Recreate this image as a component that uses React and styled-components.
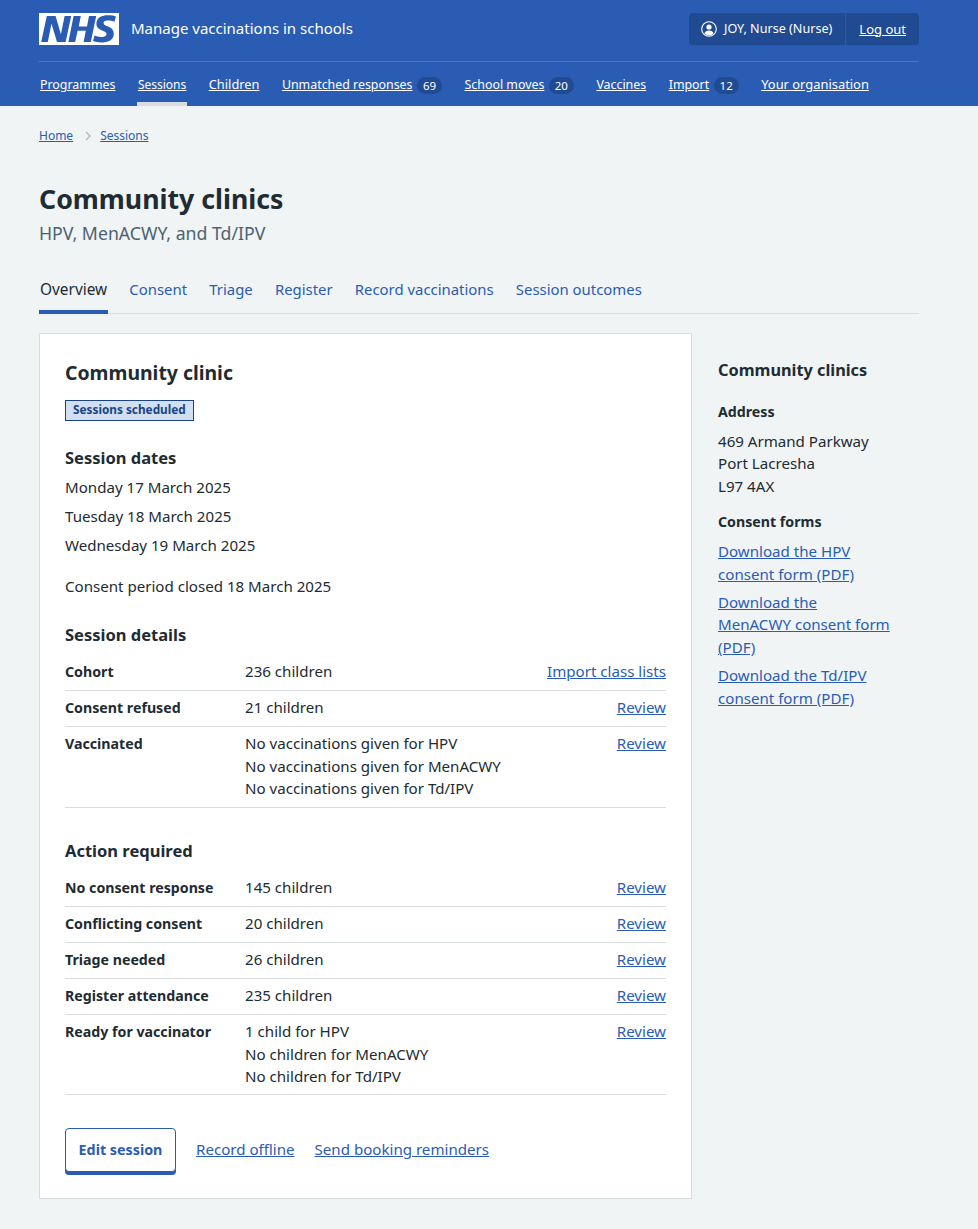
import React from "react";
import styled, { createGlobalStyle } from "styled-components";

const GlobalStyle = createGlobalStyle`
  html, body { margin: 0; padding: 0; }
  body {
    background: #f0f4f5;
    color: #212b32;
    font-family: "Noto Sans", "Open Sans", sans-serif;
    font-size: 15.1px;
    line-height: 22.4px;
  }
  a { color: #2a5cb4; }
`;

const Header = styled.header`
  background: #2a5cb4;
  color: #fff;
  padding: 13px 59px 0 39px;
  height: 106px;
  box-sizing: border-box;
`;

const TopRow = styled.div`
  display: flex;
  align-items: center;
  justify-content: space-between;
  height: 32px;
  padding-bottom: 16px;
  border-bottom: 1px solid #4a76c4;
`;

const Brand = styled.div`
  display: flex;
  align-items: center;
  gap: 12px;
  font-size: 15px;
  padding-bottom: 1px;
`;

const Logo = styled.svg`
  width: 80px;
  height: 32px;
  display: block;
  margin-top: 1px;
`;

const Account = styled.div`
  display: flex;
  height: 32px;
  background: #204a91;
  border-radius: 4px;
  font-size: 12.6px;
  align-items: stretch;
`;

const AccountName = styled.div`
  display: flex;
  align-items: center;
  gap: 7px;
  padding: 0 13px 0 12px;
  border-right: 1px solid #2a5cb4;
  white-space: nowrap;
`;

const AccountLink = styled.a`
  display: flex;
  align-items: center;
  padding: 0 13px;
  font-size: 13px;
  && { color: #fff; }
`;

const Nav = styled.nav`
  display: flex;
  height: 44px;
`;

const NavItem = styled.a`
  display: flex;
  align-items: center;
  gap: 4.5px;
  font-size: ${(p) => p.$size || "12.4px"};
  padding: ${(p) => (p.$raised ? "5px" : "7px")} 1px 0;
  margin-right: 20.5px;
  height: 44px;
  box-sizing: border-box;
  white-space: nowrap;
  text-decoration: none;
  border-bottom: 4px solid ${(p) => (p.$active ? "#d8dde0" : "transparent")};
  && { color: #fff; }
  span:first-child { text-decoration: underline; }
`;

const Count = styled.span`
  background: #204a91;
  border-radius: 9px;
  font-size: 11.5px;
  height: 17px;
  line-height: 17px;
  width: 25px;
  text-align: center;
`;

const Main = styled.main`
  padding: 0 59px 30px 39px;
`;

const Breadcrumb = styled.div`
  display: flex;
  align-items: center;
  font-size: 12px;
  height: 20px;
  padding-top: 20px;
`;

const Chevron = styled.svg`
  width: 8px;
  height: 10px;
  margin: 0 8px 0 11px;
`;

const Title = styled.h1`
  font-size: 26.7px;
  line-height: 36px;
  font-weight: 700;
  margin: 35px 0 0;
`;

const Subtitle = styled.div`
  font-size: 17.7px;
  line-height: 26px;
  color: #4c6272;
  margin-top: 3px;
`;

const Tabs = styled.div`
  display: flex;
  gap: 20.2px;
  margin-top: 21px;
  border-bottom: 1px solid #d8dde0;
  height: 46px;
`;

const Tab = styled.a`
  padding: ${(p) => (p.$active ? "12px" : "11px")} 1px 0;
  height: 47px;
  box-sizing: border-box;
  text-decoration: none;
  font-size: ${(p) => (p.$active ? "15.4px" : "14.9px")};
  color: ${(p) => (p.$active ? "#212b32" : "#2a5cb4")};
  border-bottom: ${(p) => (p.$active ? "4px solid #2a5cb4" : "none")};
`;

const Columns = styled.div`
  display: grid;
  grid-template-columns: 653px 1fr;
  column-gap: 26px;
  margin-top: 19px;
`;

const Card = styled.section`
  background: #fff;
  border: 1px solid #d8dde0;
  padding: 25px 25px 23px;
  box-sizing: border-box;
  height: 866px;
`;

const CardTitle = styled.h2`
  font-size: 19.4px;
  line-height: 28px;
  font-weight: 700;
  margin: 0;
`;

const Tag = styled.strong`
  display: inline-block;
  margin-top: 13px;
  padding: 0 7px;
  height: 19px;
  line-height: 17px;
  font-size: 11.8px;
  font-weight: 700;
  background: #d0dff2;
  border: 1px solid #1d4482;
  color: #1d4482;
`;

const SectionTitle = styled.h3`
  font-size: 16.5px;
  line-height: 24px;
  font-weight: 700;
  margin: ${(p) => p.$top || "25px"} 0 0;
`;

const DateLine = styled.p`
  margin: ${(p) => p.$top || "6.6px"} 0 0;
`;

const Rows = styled.div`
  margin-top: ${(p) => p.$top};
`;

const Row = styled.div`
  display: grid;
  grid-template-columns: 180px 1fr auto;
  padding: 5.5px 0 7.1px;
  border-bottom: 1px solid #d8dde0;
`;

const RowKey = styled.div`
  font-weight: 700;
  font-size: 14.2px;
  margin: 0.5px 0 -0.5px;
`;

const Actions = styled.div`
  display: flex;
  align-items: flex-start;
  gap: 20px;
  margin-top: 33px;
`;

const EditButton = styled.a`
  display: block;
  width: 111px;
  height: 44px;
  box-sizing: border-box;
  border: 1px solid #2a5cb4;
  border-radius: 4px;
  box-shadow: 0 3px 0 #2a5cb4;
  background: #fff;
  text-align: center;
  line-height: 42px;
  font-weight: 700;
  font-size: 14.3px;
  text-decoration: none;
`;

const ActionLink = styled.a`
  margin-top: 10px;
`;

const Side = styled.aside`
  padding-top: 25px;
`;

const SideTitle = styled.h2`
  font-size: 16.3px;
  line-height: 24px;
  font-weight: 700;
  margin: 0;
`;

const SideHeading = styled.h3`
  font-size: 14.2px;
  line-height: 22px;
  font-weight: 700;
  margin: ${(p) => p.$top} 0 7px;
`;

const SideLink = styled.a`
  display: block;
  margin-bottom: 6px;
`;

const rowsTop = [
  ["Cohort", ["236 children"], "Import class lists"],
  ["Consent refused", ["21 children"], "Review"],
  ["Vaccinated", ["No vaccinations given for HPV", "No vaccinations given for MenACWY", "No vaccinations given for Td/IPV"], "Review"],
];

const rowsAction = [
  ["No consent response", ["145 children"], "Review"],
  ["Conflicting consent", ["20 children"], "Review"],
  ["Triage needed", ["26 children"], "Review"],
  ["Register attendance", ["235 children"], "Review"],
  ["Ready for vaccinator", ["1 child for HPV", "No children for MenACWY", "No children for Td/IPV"], "Review"],
];

const navItems = [
  { label: "Programmes" },
  { label: "Sessions", active: true, size: "12px" },
  { label: "Children", size: "12.8px", raised: true },
  { label: "Unmatched responses", count: "69" },
  { label: "School moves", count: "20" },
  { label: "Vaccines" },
  { label: "Import", count: "12" },
  { label: "Your organisation", size: "12.9px", raised: true },
];

const tabs = ["Consent", "Triage", "Register", "Record vaccinations", "Session outcomes"];

function SummaryRows({ rows, top }) {
  return (
    <Rows $top={top}>
      {rows.map(([key, lines, action]) => (
        <Row key={key}>
          <RowKey>{key}</RowKey>
          <div>
            {lines.map((l) => (
              <div key={l}>{l}</div>
            ))}
          </div>
          <a href="#">{action}</a>
        </Row>
      ))}
    </Rows>
  );
}

export default function App() {
  return (
    <>
      <GlobalStyle />
      <Header>
        <TopRow>
          <Brand>
            <Logo viewBox="0 0 40 16" aria-label="NHS">
              <path fill="#fff" d="M0 0h40v16H0z" />
              <path
                fill="#2a5cb4"
                d="M3.9 1.5h4.4l2.6 9h.1l1.8-9h3.3l-2.8 13H9l-2.7-9h-.1l-1.8 9H1.1M17.3 1.5h3.6l-1 5.2h4.1l1-5.2h3.6l-2.7 13h-3.6l1.1-5.6h-4.1l-1.2 5.6h-3.4M37.7 4.4c-.7-.3-1.6-.6-2.9-.6-1.4 0-2.5.2-2.5 1.3 0 1.8 5.1 1.2 5.1 5.1 0 3.6-3.3 4.5-6.4 4.5-1.3 0-2.9-.3-4-.7l.8-2.7c.7.4 2.1.7 3.2.7s2.8-.2 2.8-1.5c0-2.1-5.1-1.3-5.1-5 0-3.4 2.9-4.4 5.8-4.4 1.6 0 3.1.2 4 .6"
              />
            </Logo>
            Manage vaccinations in schools
          </Brand>
          <Account>
            <AccountName>
              <svg width="16" height="16" viewBox="0 0 16 16">
                <circle cx="8" cy="8" r="7.3" fill="none" stroke="#fff" strokeWidth="1.1" />
                <circle cx="8" cy="6" r="2.6" fill="#fff" />
                <path fill="#fff" d="M3.4 12.6c.5-2 2.4-3.1 4.6-3.1s4.1 1.1 4.6 3.1A6.6 6.6 0 0 1 8 14.6a6.6 6.6 0 0 1-4.6-2z" />
              </svg>
              JOY, Nurse (Nurse)
            </AccountName>
            <AccountLink href="#">Log out</AccountLink>
          </Account>
        </TopRow>
        <Nav>
          {navItems.map(({ label, count, active, size, raised }) => (
            <NavItem href="#" key={label} $active={active} $size={size} $raised={raised}>
              <span>{label}</span>
              {count && <Count>{count}</Count>}
            </NavItem>
          ))}
        </Nav>
      </Header>
      <Main>
        <Breadcrumb>
          <a href="#">Home</a>
          <Chevron viewBox="0 0 8 10">
            <path d="M2 1l4 4-4 4" fill="none" stroke="#aeb7bd" strokeWidth="1.3" />
          </Chevron>
          <a href="#">Sessions</a>
        </Breadcrumb>
        <Title>Community clinics</Title>
        <Subtitle>HPV, MenACWY, and Td/IPV</Subtitle>
        <Tabs>
          <Tab href="#" $active>Overview</Tab>
          {tabs.map((t) => (
            <Tab href="#" key={t}>{t}</Tab>
          ))}
        </Tabs>
        <Columns>
          <Card>
            <CardTitle>Community clinic</CardTitle>
            <Tag>Sessions scheduled</Tag>
            <SectionTitle>Session dates</SectionTitle>
            <DateLine $top="6px">Monday 17 March 2025</DateLine>
            <DateLine>Tuesday 18 March 2025</DateLine>
            <DateLine>Wednesday 19 March 2025</DateLine>
            <DateLine $top="19px">Consent period closed 18 March 2025</DateLine>
            <SectionTitle>Session details</SectionTitle>
            <SummaryRows rows={rowsTop} top="8px" />
            <SectionTitle $top="31px">Action required</SectionTitle>
            <SummaryRows rows={rowsAction} top="8px" />
            <Actions>
              <EditButton href="#">Edit session</EditButton>
              <ActionLink href="#">Record offline</ActionLink>
              <ActionLink href="#">Send booking reminders</ActionLink>
            </Actions>
          </Card>
          <Side>
            <SideTitle>Community clinics</SideTitle>
            <SideHeading $top="19px">Address</SideHeading>
            <div>469 Armand Parkway<br />Port Lacresha<br />L97 4AX</div>
            <SideHeading $top="14px">Consent forms</SideHeading>
            <SideLink href="#">Download the HPV<br />consent form (PDF)</SideLink>
            <SideLink href="#">Download the<br />MenACWY consent form<br />(PDF)</SideLink>
            <SideLink href="#">Download the Td/IPV<br />consent form (PDF)</SideLink>
          </Side>
        </Columns>
      </Main>
    </>
  );
}
